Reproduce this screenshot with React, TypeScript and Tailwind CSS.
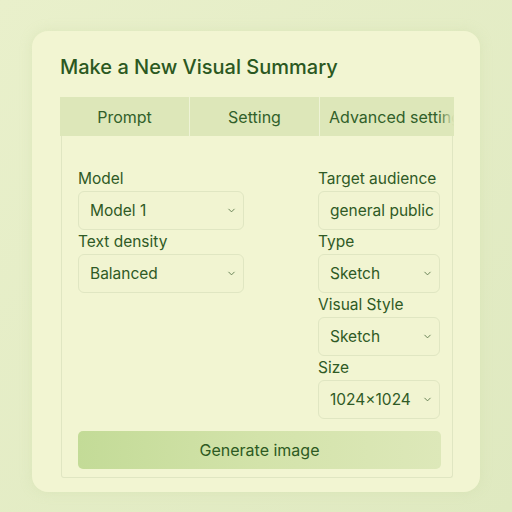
import { ChevronDown } from 'lucide-react'

const leftFields = [
  { label: 'Model', value: 'Model 1' },
  { label: 'Text density', value: 'Balanced' },
]

const rightFields = [
  { label: 'Target audience', value: 'general public', input: true },
  { label: 'Type', value: 'Sketch' },
  { label: 'Visual Style', value: 'Sketch' },
  { label: 'Size', value: '1024×1024' },
]

function Field({ label, value, input }: { label: string; value: string; input?: boolean }) {
  return (
    <div className="flex flex-col">
      <span className="h-[21px] whitespace-nowrap text-[15.5px] leading-[18px] text-[#2f5a25]">{label}</span>
      <div className="h-[39px] flex items-center justify-between rounded-[6px] border border-[#e0e6c2] bg-[#f1f4d1] pl-[11px] pr-[6px] text-[15.5px] text-[#2f5a25]">
        <span className="whitespace-nowrap">{value}</span>
        {!input && <ChevronDown className="w-[11px] h-[11px] text-[#5d7a4c]" strokeWidth={2} />}
      </div>
    </div>
  )
}

export default function App() {
  return (
    <div
      className="w-[512px] h-[512px] bg-gradient-to-br from-[#e9f0cb] to-[#dfe9c0] pt-[31px] pl-[32px]"
      style={{ fontFamily: 'Inter, "Noto Sans", sans-serif' }}
    >
      <div className="w-[448px] h-[461px] rounded-[16px] bg-[#f2f5d2] shadow-[0_0_12px_rgba(200,215,160,0.35)] pt-[23px] pl-[28px]">
        <h1 className="text-[20px] font-medium leading-[26px] text-[#2b5821]">Make a New Visual Summary</h1>

        <div className="mt-[17px] w-[394px]">
          <div className="flex h-[39px] bg-[#dde7b9] text-[16px] text-[#31602a]">
            <div className="w-[130px] flex items-center justify-center border-r border-[#eef3d6]">Prompt</div>
            <div className="w-[130px] flex items-center justify-center border-r border-[#eef3d6]">Setting</div>
            <div className="relative flex-1 flex items-center pl-[9px] overflow-hidden whitespace-nowrap">
              Advanced settings
              <div className="absolute right-0 top-0 h-full w-[16px] bg-gradient-to-r from-[#dde7b900] to-[#dde7b9]" />
            </div>
          </div>

          <div className="w-[392px] ml-[1px] h-[342px] border-x border-b border-[#e0e6c2] rounded-b-[3px] pt-[34px] px-[16px]">
            <div className="flex justify-between">
              <div className="w-[166px] flex flex-col gap-[3px]">
                {leftFields.map((f) => (
                  <Field key={f.label} label={f.label} value={f.value} />
                ))}
              </div>
              <div className="w-[122px] flex flex-col gap-[3px] mr-[-4px]">
                {rightFields.map((f) => (
                  <Field key={f.label} label={f.label} value={f.value} input={f.input} />
                ))}
              </div>
            </div>

            <button className="mt-[12px] w-[363px] h-[38px] rounded-[5px] bg-gradient-to-r from-[#c3db97] via-[#d3e3aa] to-[#dde8b9] text-[16px] text-[#2d5a22]">
              Generate image
            </button>
          </div>
        </div>
      </div>
    </div>
  )
}
